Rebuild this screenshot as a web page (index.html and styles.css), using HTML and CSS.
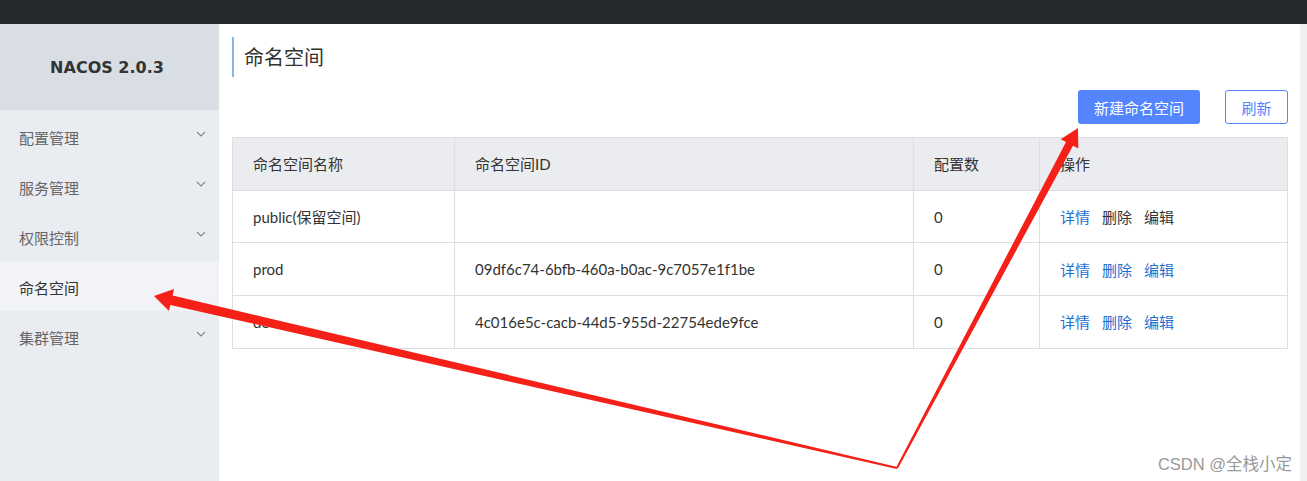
FILE: index.html
```html
<!DOCTYPE html>
<html lang="zh-CN">

<head>
  <meta charset="UTF-8">
  <meta name="viewport" content="width=device-width, initial-scale=1.0">
  <title>命名空间 - Nacos</title>
  <link rel="stylesheet" href="styles.css">
</head>

<body>
  <div class="topbar"></div>

  <div class="layout">
    <aside class="sidebar">
      <div class="logo">NACOS 2.0.3</div>
      <ul class="menu">
        <li class="menu-item">配置管理<svg class="chevron" viewBox="0 0 10 6"><path d="M1 1l4 4 4-4" /></svg></li>
        <li class="menu-item">服务管理<svg class="chevron" viewBox="0 0 10 6"><path d="M1 1l4 4 4-4" /></svg></li>
        <li class="menu-item">权限控制<svg class="chevron" viewBox="0 0 10 6"><path d="M1 1l4 4 4-4" /></svg></li>
        <li class="menu-item active">命名空间</li>
        <li class="menu-item">集群管理<svg class="chevron" viewBox="0 0 10 6"><path d="M1 1l4 4 4-4" /></svg></li>
      </ul>
    </aside>

    <main class="main">
      <div class="page-title">命名空间</div>

      <div class="toolbar">
        <button class="btn btn-primary">新建命名空间</button>
        <button class="btn btn-normal">刷新</button>
      </div>

      <table class="ns-table">
        <thead>
          <tr>
            <th class="col-name">命名空间名称</th>
            <th class="col-id">命名空间ID</th>
            <th class="col-count">配置数</th>
            <th>操作</th>
          </tr>
        </thead>
        <tbody>
          <tr>
            <td>public(保留空间)</td>
            <td></td>
            <td>0</td>
            <td class="actions"><a class="link">详情</a><span class="plain">删除</span><span class="plain">编辑</span></td>
          </tr>
          <tr>
            <td>prod</td>
            <td>09df6c74-6bfb-460a-b0ac-9c7057e1f1be</td>
            <td>0</td>
            <td class="actions"><a class="link">详情</a><a class="link">删除</a><a class="link">编辑</a></td>
          </tr>
          <tr>
            <td>dev</td>
            <td>4c016e5c-cacb-44d5-955d-22754ede9fce</td>
            <td>0</td>
            <td class="actions"><a class="link">详情</a><a class="link">删除</a><a class="link">编辑</a></td>
          </tr>
        </tbody>
      </table>
    </main>

    <div class="scroll-track"></div>
  </div>

  <!-- 标注箭头 -->
  <svg class="arrows" viewBox="0 0 1307 481">
    <polygon points="154,296 174,289 172.6,295.5 897.2,467 896.8,469 170.4,305 169,311" />
    <polygon points="1078,128 1078.3,148.6 1073,145.8 897.9,468.5 896.1,467.5 1066,142 1060.7,139.2" />
  </svg>

  <div class="watermark">CSDN @全栈小定</div>
</body>

</html>
```

FILE: styles.css
```css
body {
  margin: 0;
  height: 481px;
  overflow: hidden;
  font-family: Lato, "Noto Sans CJK SC", sans-serif;
  font-size: 15px;
  color: #333;
  background: #fff;
}

.topbar {
  height: 24px;
  background: #25292e;
}

.layout {
  display: flex;
  height: 457px;
}

/* 左侧菜单 */
.sidebar {
  width: 219px;
  flex-shrink: 0;
  background: #e9ecf1;
}

.logo {
  height: 86px;
  display: flex;
  align-items: center;
  justify-content: center;
  padding-right: 5px;
  background: #d9dee4;
  font-family: "DejaVu Sans", sans-serif;
  font-weight: bold;
  font-size: 16px;
  color: #333;
}

.menu {
  list-style: none;
  margin: 0;
  padding: 1px 0 0;
}

.menu-item {
  height: 50px;
  display: flex;
  align-items: center;
  justify-content: space-between;
  padding: 3px 13px 0 19px;
  box-sizing: border-box;
  color: #666;
}

.menu-item.active {
  background: #f2f3f7;
  color: #333;
}

.chevron {
  width: 10px;
  height: 6px;
  margin-top: -7px;
  fill: none;
  stroke: #888;
  stroke-width: 1.1;
}

/* 主体 */
.main {
  flex: 1;
  padding: 13px 12px 0 13px;
}

.page-title {
  height: 40px;
  line-height: 40px;
  border-left: 2px solid #88b7e0;
  padding-left: 10px;
  font-size: 20px;
  color: #333;
}

.toolbar {
  display: flex;
  justify-content: flex-end;
  gap: 25px;
  margin: 13px 0;
}

.btn {
  height: 34px;
  padding: 0;
  border-radius: 3px;
  font-family: inherit;
  font-size: 15px;
  cursor: pointer;
}

.btn-primary {
  width: 122px;
  background: #5584ff;
  border: none;
  color: #fff;
}

.btn-normal {
  width: 63px;
  background: #fff;
  border: 1px solid #5584ff;
  color: #5584ff;
}

.ns-table {
  width: 100%;
  border-collapse: collapse;
}

.ns-table th,
.ns-table td {
  height: 51.7px;
  padding: 0 20px;
  border: 1px solid #dcdee3;
  text-align: left;
  font-weight: normal;
  color: #333;
}

.ns-table th {
  background: #ebecf0;
}

.col-name {
  width: 181px;
}

.col-id {
  width: 418px;
}

.col-count {
  width: 85px;
}

.actions a,
.actions span {
  margin-right: 12px;
}

.link {
  color: #1f6fd1;
  cursor: pointer;
}

.plain {
  color: #333;
}

.scroll-track {
  width: 7px;
  background: #f0f0f0;
}

/* 标注 */
.arrows {
  position: absolute;
  left: 0;
  top: 0;
  width: 1307px;
  height: 481px;
  pointer-events: none;
  fill: #f52118;
}

.watermark {
  position: absolute;
  right: 15px;
  top: 451px;
  font-family: "Liberation Sans", "Noto Sans CJK SC", sans-serif;
  font-size: 16.5px;
  color: #999;
}
```
